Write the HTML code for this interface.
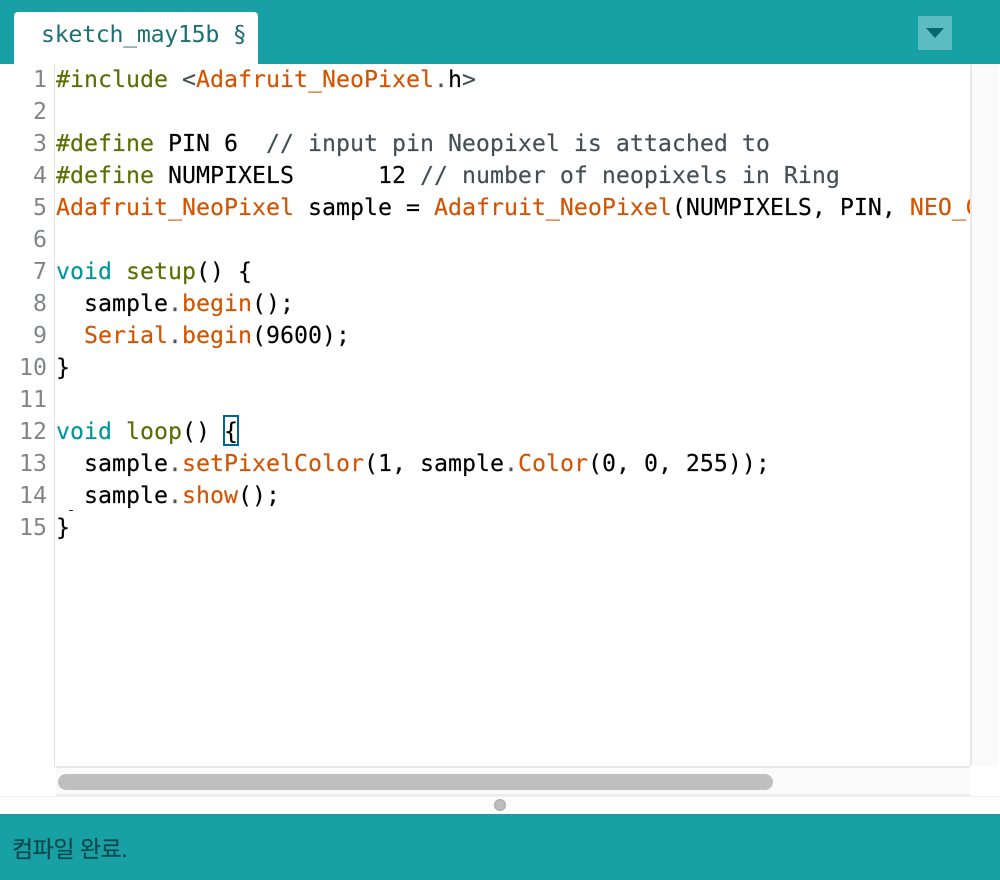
<!DOCTYPE html>
<html><head><meta charset="utf-8">
<style>
html,body{margin:0;padding:0;width:1000px;height:880px;overflow:hidden;background:#fff}
.a{position:absolute}
#code,#nums{font-family:"DejaVu Sans Mono","Liberation Mono",monospace;font-size:23.25px;line-height:32px;white-space:pre}
#code{left:56px;top:64px;width:914px;height:700px;overflow:hidden;color:#000;-webkit-text-stroke:0.15px}
#nums{left:0;top:64px;width:47px;text-align:right;color:#838688}
.k{color:#5e6d03}.t{color:#00979c}.o{color:#d35400}.c{color:#434f54}
</style></head>
<body>
<div class="a" style="left:0;top:0;width:1000px;height:64px;background:#17a1a5"></div>
<div class="a" style="left:14px;top:12px;width:244px;height:52px;background:#fff;border-radius:4px 4px 0 0"></div>
<div class="a" style="left:41px;top:19px;font:23.25px/32px 'DejaVu Sans Mono','Liberation Mono',monospace;letter-spacing:-0.3px;color:#1c6f74;white-space:pre">sketch_may15b §</div>
<div class="a" style="left:918px;top:16px;width:34px;height:34px;background:#5cbcbf"></div>
<svg class="a" style="left:925px;top:27px" width="20" height="12"><path d="M1 1H19L10 11Z" fill="#05696d"/></svg>

<div class="a" style="left:54px;top:64px;width:1px;height:703px;background:#e0e0e0"></div>
<div id="nums" class="a">1
2
3
4
5
6
7
8
9
10
11
12
13
14
15</div>
<div id="code" class="a"><span class="k">#include</span> <span class="c">&lt;</span><span class="o">Adafruit_NeoPixel</span><span class="c">.</span>h<span class="c">&gt;</span>

<span class="k">#define</span> PIN 6  <span class="c">// input pin Neopixel is attached to</span>
<span class="k">#define</span> NUMPIXELS      12 <span class="c">// number of neopixels in Ring</span>
<span class="o">Adafruit_NeoPixel</span> sample = <span class="o">Adafruit_NeoPixel</span>(NUMPIXELS, PIN, <span class="o">NEO_GRB</span>

<span class="t">void</span> <span class="k">setup</span>() {
  sample<span class="c">.</span><span class="o">begin</span>();
  <span class="o">Serial</span><span class="c">.</span><span class="o">begin</span>(9600);
}

<span class="t">void</span> <span class="k">loop</span>() {
  sample<span class="c">.</span><span class="o">setPixelColor</span>(1, sample<span class="c">.</span><span class="o">Color</span>(0, 0, 255));
  sample<span class="c">.</span><span class="o">show</span>();
}</div>
<div class="a" style="left:223px;top:415px;width:12px;height:27px;border:2px solid #006699"></div>
<div class="a" style="left:69px;top:510px;width:4px;height:1px;background:#333"></div>

<div class="a" style="left:970px;top:64px;width:30px;height:702px;background:#fafafa"></div>
<div class="a" style="left:970px;top:64px;width:2px;height:702px;background:#e8e8e8"></div>
<div class="a" style="left:998px;top:64px;width:2px;height:702px;background:#fff"></div>
<div class="a" style="left:56px;top:766px;width:914px;height:2px;background:#e8e8e8"></div>
<div class="a" style="left:56px;top:768px;width:914px;height:26px;background:#fafafa"></div>
<div class="a" style="left:0;top:796px;width:1000px;height:18px;background:linear-gradient(#fbfbfb,#fff)"></div>
<div class="a" style="left:0;top:796px;width:1000px;height:1px;background:#f0f0f0"></div>
<div class="a" style="left:56px;top:794px;width:914px;height:2px;background:#ececec"></div>
<div class="a" style="left:58px;top:774px;width:715px;height:16px;border-radius:8px;background:#bfbfbf"></div>
<div class="a" style="left:494px;top:799px;width:10px;height:10px;border-radius:50%;background:#bdbdbd;border:1px solid #a8a8a8"></div>

<div class="a" style="left:0;top:814px;width:1000px;height:66px;background:#17a1a5"></div>
<div class="a" style="left:12px;top:832px;font:23px/34px 'Liberation Sans','Noto Sans CJK KR',sans-serif;letter-spacing:-0.5px;color:#0a4a4e;-webkit-text-stroke:0.2px;white-space:pre">컴파일 완료.</div>
</body></html>
